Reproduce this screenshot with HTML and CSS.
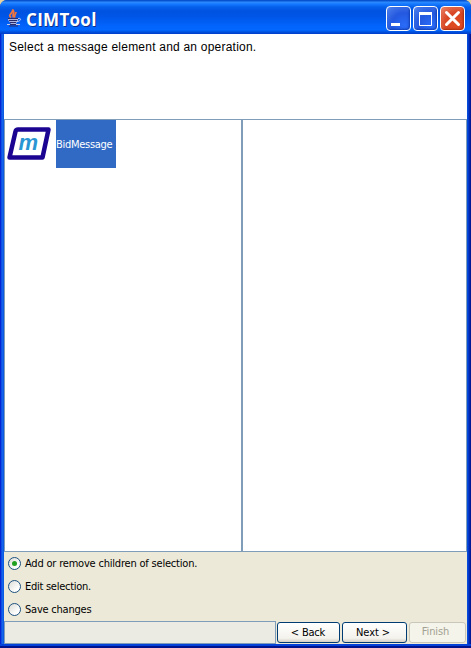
FILE: index.html
```html
<!DOCTYPE html>
<html lang="en">
<head>
<meta charset="utf-8">
<title>CIMTool</title>
<link rel="stylesheet" href="styles.css">
</head>
<body>
<div class="window">
  <header class="titlebar">
    <svg class="java" width="17" height="18" viewBox="0 0 17 18" fill="none">
      <path d="M5 8.500C1 5.500 8 4 6.500 .500c3.500 3-1 4 1 8M9 8.500C7.500 6 10 5.500 10 3" stroke="#f0743c" stroke-width="1.700"/>
      <path d="M2 9h10v2l-2 4H5l-3-4z" fill="#aab4dc"/>
      <path d="M2 9.500h10M3 11.500h8M4 13.500h6" stroke="#2c2c6c"/>
      <path d="M12 9.500c4-1 3 3-1 3" stroke="#c4cdee"/>
      <path d="M1 15.500h3M10 15.500h4" stroke="#c4cdee"/>
      <path d="M4 15.500h6M3 17h9" stroke="#2c2c6c"/>
    </svg>
    <h1 class="title">CIMTool</h1>
    <div class="controls">
      <button class="ctl" aria-label="Minimize"><svg width="23" height="23"><path fill="#fff" d="M4 16h9v3H4z"/></svg></button>
      <button class="ctl" aria-label="Maximize"><svg width="23" height="23"><path d="M5.500 6v12.500h12V6" fill="none" stroke="#fff"/><path fill="#fff" d="M5 5h13v3H5z"/></svg></button>
      <button class="ctl close" aria-label="Close"><svg width="23" height="23"><path d="M5.500 5.500l12 12M17.500 5.500l-12 12" stroke="#fff" stroke-width="3" stroke-linecap="round"/></svg></button>
    </div>
  </header>
  <main class="content">
    <p class="prompt">Select a message element and an operation.</p>
    <div class="panes">
      <section class="pane tree">
        <div class="node">
          <svg width="51" height="48" viewBox="0 0 51 48">
            <path d="M13 9.500H43.500L37.500 37.500H4.500L10.500 11.500Q11 9.500 13 9.500Z" fill="#fff" stroke="#1c0492" stroke-width="4.500" stroke-linejoin="round"/>
            <text class="glyph" x="13.500" y="30">m</text>
          </svg>
          <span class="selected">BidMessage</span>
        </div>
      </section>
      <section class="pane"></section>
    </div>
    <div class="options">
      <label class="option"><span class="radio on"></span><span class="t1">Add or remove children of selection.</span></label>
      <label class="option"><span class="radio"></span><span class="t2">Edit selection.</span></label>
      <label class="option"><span class="radio"></span><span class="t3">Save changes</span></label>
    </div>
    <footer class="bar">
      <div class="status"></div>
      <button class="btn back">&lt; Back</button>
      <button class="btn next">Next &gt;</button>
      <button class="btn finish" disabled>Finish</button>
    </footer>
  </main>
</div>
</body>
</html>
```
FILE: styles.css
```css
* { box-sizing: border-box; }
body {
  margin: 0;
  background: #e6d3a0;
  font-family: "DejaVu Sans Condensed", "DejaVu Sans", sans-serif;
  font-stretch: condensed;
  font-size: 11px;
  color: #000;
}
.window {
  width: 471px;
  height: 648px;
  padding: 0 4px 4px;
  border-radius: 7px 7px 0 0;
  background: linear-gradient(90deg, #0019cf 0, #0831d9 1px, #166aee 2px, #0855dd 4px, #0855dd 467px, #0441d8 468px, #001ea0 470px, #00138c 471px);
  box-shadow: inset 0 -2px #00138c, inset 0 -4px #0441d8;
  overflow: hidden;
}
.titlebar {
  display: flex;
  height: 34px;
  margin: 0 -4px;
  padding: 6px 6px 0 6px;
  background: linear-gradient(#0752cf 0, #0752cf 1px, #308cff 2px, #157aff 4px, #0560ec 7px, #0053df 11px, #0056e8 17px, #0264fd 26px, #0268ff 30px, #0050dc 32px, #003dc8 34px);
}
.java { margin-top: 3px; }
.title {
  margin: 0 auto 0 3px;
  color: #fff;
  font: bold 17px/27px "Open Sans", sans-serif;
  letter-spacing: .3px;
  text-shadow: 1px 1px #10318c;
}
.controls { display: flex; gap: 2px; }
.ctl {
  width: 25px;
  height: 25px;
  padding: 0;
  border: 1px solid #fff;
  border-radius: 4px;
  background: radial-gradient(circle at 75% 80%, #2a6cf8, #2458df 50%, #4376e8 85%, #6f98f4);
  box-shadow: inset -1px -1px 2px #123fb4;
}
.ctl svg { display: block; }
.close {
  background: radial-gradient(circle at 70% 75%, #e04b20, #d84725 50%, #e8795c 90%);
  box-shadow: inset -1px -1px 2px #a92c0e;
}
.content {
  display: flex;
  flex-direction: column;
  height: 610px;
  background: #ece9d8;
}
.prompt {
  height: 85px;
  margin: 0;
  padding: 6px 5px;
  background: #fff;
  font: 12px/14px "Liberation Sans", sans-serif;
  letter-spacing: .22px;
  white-space: nowrap;
}
.panes { display: grid; grid-template-columns: 238px 225px; height: 433px; }
.pane { border: 1px solid #7f9db9; background: #fff; }
.node { display: flex; height: 48px; }
.glyph { font: italic bold 22px "Liberation Sans", sans-serif; fill: #2996d3; }
.selected {
  width: 60px;
  background: #316ac5;
  color: #fff;
  line-height: 49px;
  letter-spacing: -.28px;
}
.options { height: 69px; }
.option { display: flex; align-items: center; height: 23px; padding-left: 4px; gap: 4px; white-space: nowrap; }
.t1 { letter-spacing: -.2px; }
.t2 { letter-spacing: -.27px; }
.t3 { letter-spacing: -.22px; }
.radio {
  display: grid;
  place-items: center;
  width: 13px;
  height: 13px;
  border: 1px solid #1c5180;
  border-radius: 50%;
  background: linear-gradient(135deg, #dcdcd7, #fff 75%);
}
.on::after { content: ""; width: 5px; height: 5px; border-radius: 50%; background: #22a121; }
.bar { display: flex; height: 23px; }
.status { width: 272px; border: 1px solid #7f9db9; background: #ebebe4; }
.btn {
  height: 21px;
  margin: 1px 0 0 1px;
  padding: 0;
  border: 1px solid #003c74;
  border-radius: 3px;
  background: linear-gradient(#fff, #f3f2ec 80%, #d6d0c5);
  color: #000;
  font: inherit;
  letter-spacing: -.3px;
  line-height: 19px;
}
.back { width: 63px; padding-right: 1px; letter-spacing: -.2px; }
.next { width: 65px; margin-left: 2px; padding-right: 3px; letter-spacing: -.1px; }
.finish { width: 57px; margin-left: 2px; padding: 0 4px 2px 0; border-color: #c9c7ba; background: #f5f4ea; color: #a1a192; line-height: 17px; letter-spacing: -.1px; }
```
